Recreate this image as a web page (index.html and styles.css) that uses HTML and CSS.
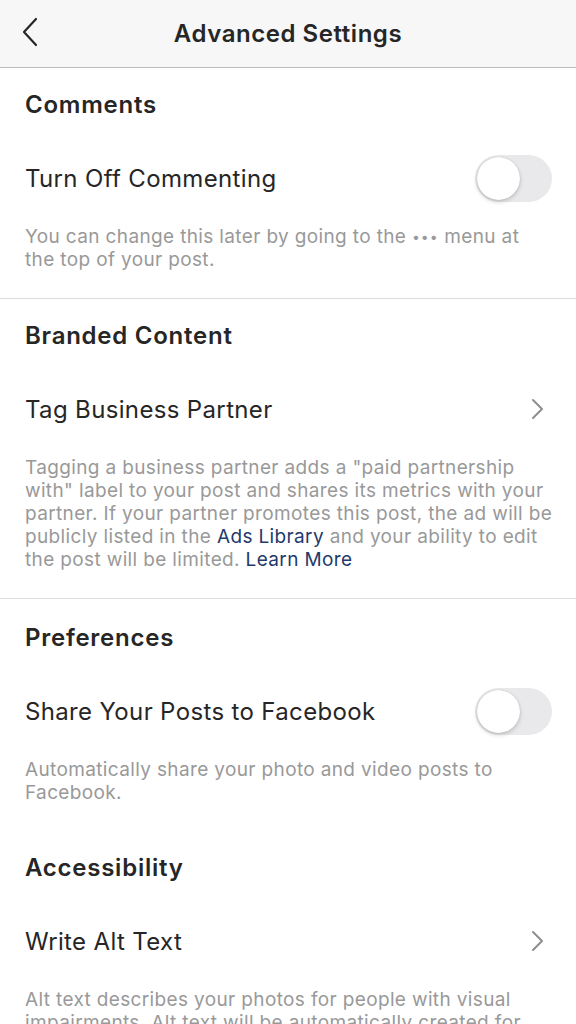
FILE: index.html
```html
<!DOCTYPE html>
<html lang="en">
<head>
  <meta charset="UTF-8" />
  <meta name="viewport" content="width=device-width, initial-scale=1.0">
  <title>Advanced Settings</title>
<link rel="stylesheet" href="styles.css">
</head>
<body>
  <header class="topbar">
    <button class="back" aria-label="Back">
      <svg width="18" height="30" viewBox="0 0 18 30"><path d="M15 2 L3 15 L15 28" fill="none" stroke="#262626" stroke-width="2.2" stroke-linecap="round" stroke-linejoin="round"/></svg>
    </button>
    <h1>Advanced Settings</h1>
  </header>

  <section class="group">
    <h2>Comments</h2>
    <div class="row">
      <span>Turn Off Commenting</span>
      <span class="switch"><span class="knob"></span></span>
    </div>
    <p class="note">You can change this later by going to the <span class="dots">&bull;&bull;&bull;</span> menu at the&nbsp;top of your post.</p>
  </section>

  <section class="group">
    <h2>Branded Content</h2>
    <div class="row">
      <span>Tag Business Partner</span>
      <svg class="chev" width="14" height="22" viewBox="0 0 14 22"><path d="M2 2 L11 11 L2 20" fill="none" stroke="#8e8e8e" stroke-width="2" stroke-linecap="round" stroke-linejoin="round"/></svg>
    </div>
    <p class="note">Tagging a business partner adds a "paid partnership with" label to your post and shares its metrics with your partner. If your partner promotes this post, the ad will be publicly listed in the <a href="#">Ads Library</a> and your ability to edit the post will be limited. <a href="#">Learn More</a></p>
  </section>

  <section class="group plain">
    <h2>Preferences</h2>
    <div class="row">
      <span>Share Your Posts to Facebook</span>
      <span class="switch"><span class="knob"></span></span>
    </div>
    <p class="note">Automatically share your photo and video posts to Facebook.</p>
  </section>

  <section class="group plain">
    <h2>Accessibility</h2>
    <div class="row">
      <span>Write Alt Text</span>
      <svg class="chev" width="14" height="22" viewBox="0 0 14 22"><path d="M2 2 L11 11 L2 20" fill="none" stroke="#8e8e8e" stroke-width="2" stroke-linecap="round" stroke-linejoin="round"/></svg>
    </div>
    <p class="note">Alt text describes your photos for people with visual impairments. Alt text will be automatically created for your photos or you can choose to write your own.</p>
  </section>
</body>
</html>
```

FILE: styles.css
```css
body {
  margin: 0;
  font-family: "Inter", "Noto Sans", sans-serif;
  color: #262626;
  background: #fff;
}

.topbar {
  height: 67px;
  background: #f7f7f7;
  border-bottom: 1px solid #bdbdbd;
  display: flex;
  align-items: center;
  justify-content: center;
  position: relative;
}

.topbar h1 {
  margin: 0;
  font-size: 24px;
  font-weight: 600;
  letter-spacing: 0.55px;
}

.back {
  position: absolute;
  left: 21px;
  top: 17px;
  border: 0;
  padding: 0;
  background: none;
}

.group {
  padding: 15px 25px 27px;
  border-bottom: 1px solid #dcdcdc;
}

.group.plain {
  padding-top: 17px;
  border-bottom: 0;
}

.group.plain + .group.plain {
  padding-top: 15px;
}

h2 {
  margin: 0;
  font-size: 24px;
  font-weight: 600;
  line-height: 44px;
  letter-spacing: 0.75px;
}

.row {
  margin-top: 27px;
  height: 48px;
  display: flex;
  align-items: center;
  justify-content: space-between;
  font-size: 24px;
  letter-spacing: 0.35px;
}

.switch {
  width: 77px;
  height: 47px;
  border-radius: 24px;
  background: #e9e9eb;
  margin-right: -1px;
  position: relative;
}

.knob {
  position: absolute;
  left: 2px;
  top: 2px;
  width: 43px;
  height: 43px;
  border-radius: 50%;
  background: #fff;
  box-shadow: 0 2px 4px rgba(0, 0, 0, 0.18), 0 0 1px rgba(0, 0, 0, 0.25);
}

.chev {
  margin-right: 6px;
}

.note {
  margin: 23px -8px 0 0;
  font-size: 19px;
  line-height: 23px;
  letter-spacing: 0.36px;
  color: #999;
}

.note a {
  color: #1f3a6b;
  text-decoration: none;
}

.dots {
  font-size: 14px;
  letter-spacing: 1px;
  vertical-align: 1px;
}
```
